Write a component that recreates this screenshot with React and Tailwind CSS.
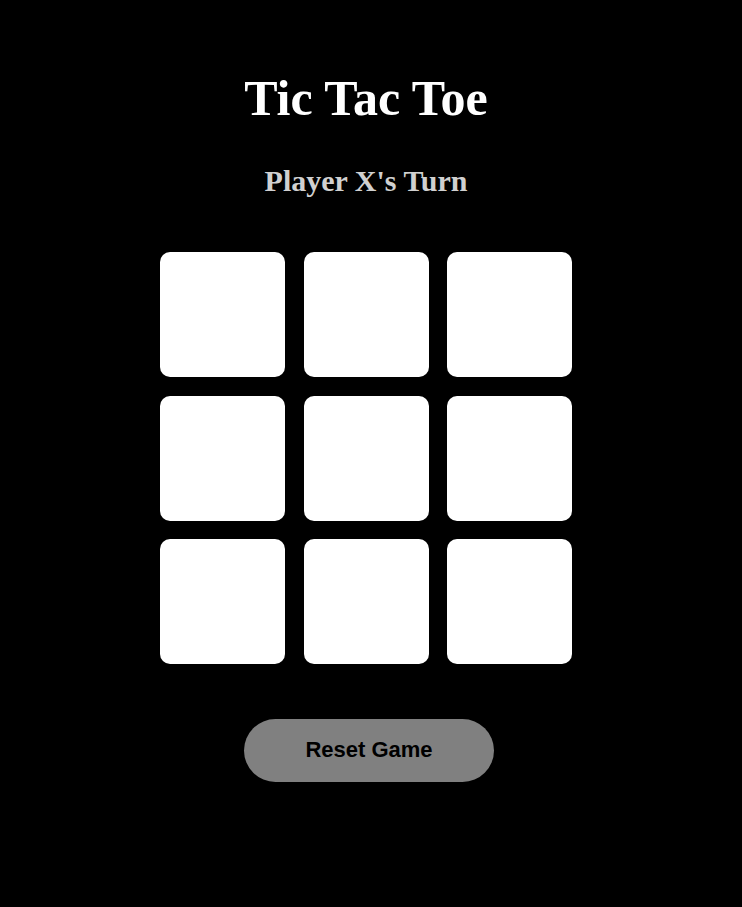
export default function App() {
  const cells = Array.from({ length: 9 });
  return (
    <div className="min-h-[907px] w-full bg-black flex flex-col items-center pr-[10px] pt-[69px] font-['Liberation_Serif',serif]">
      <h1 className="text-[50px] leading-[58px] font-bold text-white">Tic Tac Toe</h1>
      <h2 className="mt-[37px] text-[30px] leading-[34px] font-bold text-[#d0d0d0]">Player X's Turn</h2>
      <div className="mt-[54px] grid grid-cols-[125px_125px_125px] grid-rows-[125px_125px_125px] gap-[18.5px]">
        {cells.map((_, i) => (
          <button key={i} className="w-[125px] h-[125px] bg-white rounded-[10px]" />
        ))}
      </div>
      <button className="mt-[55px] ml-[6px] w-[250px] h-[63px] pb-[2px] rounded-full bg-[#808080] text-black text-[22px] font-bold font-['Liberation_Sans',Arial,sans-serif]">
        Reset Game
      </button>
    </div>
  );
}
